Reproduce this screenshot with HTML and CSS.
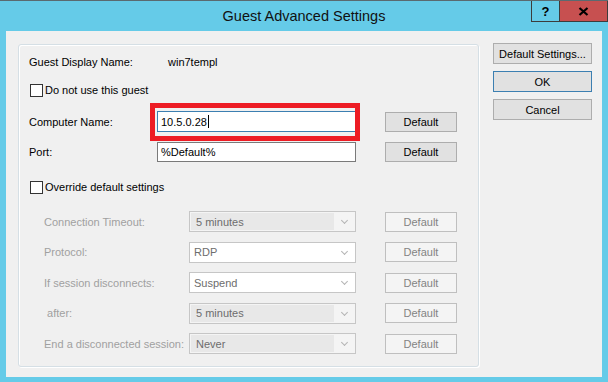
FILE: index.html
```html
<!DOCTYPE html>
<html lang="en">
<head>
  <meta charset="UTF-8">
  <title>Guest Advanced Settings</title>
  <link rel="stylesheet" href="styles.css">
</head>
<body>

  <div class="window">
    <!-- Title bar -->
    <div class="titlebar">
      <div></div>
      <div class="title">Guest Advanced Settings</div>
      <div class="caption">
        <div class="cap-btn help">?</div>
        <div class="cap-btn close">
          <svg width="11" height="9" viewBox="0 0 11 9">
            <path d="M1.5 1 L9.5 8 M9.5 1 L1.5 8" stroke="#000" stroke-width="2.2" fill="none"/>
          </svg>
        </div>
      </div>
    </div>

    <div class="client">
      <div class="group">
        <div class="row row-name">
          <span class="label label-name">Guest Display Name:</span>
          <span>win7templ</span>
        </div>

        <div class="check check-first"><span class="box"></span>Do not use this guest</div>

        <div class="row row-computer">
          <span class="label">Computer Name:</span>
          <div class="field focused highlight">10.5.0.28<span class="caret"></span></div>
          <button class="btn btn-small">Default</button>
        </div>

        <div class="row row-port">
          <span class="label">Port:</span>
          <div class="field">%Default%</div>
          <button class="btn btn-small">Default</button>
        </div>

        <div class="check check-override"><span class="box"></span>Override default settings</div>

        <!-- Disabled settings -->
        <div class="dim-rows">
          <div class="row">
            <span class="label dim">Connection Timeout:</span>
            <div class="combo readonly"><span class="value">5 minutes</span><span class="chevron"></span></div>
            <button class="btn btn-small" disabled>Default</button>
          </div>
          <div class="row">
            <span class="label dim">Protocol:</span>
            <div class="combo"><span class="value">RDP</span><span class="chevron"></span></div>
            <button class="btn btn-small" disabled>Default</button>
          </div>
          <div class="row">
            <span class="label dim">If session disconnects:</span>
            <div class="combo"><span class="value">Suspend</span><span class="chevron"></span></div>
            <button class="btn btn-small" disabled>Default</button>
          </div>
          <div class="row">
            <span class="label dim">&nbsp;after:</span>
            <div class="combo readonly"><span class="value">5 minutes</span><span class="chevron"></span></div>
            <button class="btn btn-small" disabled>Default</button>
          </div>
          <div class="row">
            <span class="label dim">End a disconnected session:</span>
            <div class="combo readonly"><span class="value">Never</span><span class="chevron"></span></div>
            <button class="btn btn-small" disabled>Default</button>
          </div>
        </div>
      </div>

      <div class="side">
        <button class="btn">Default Settings...</button>
        <button class="btn btn-default">OK</button>
        <button class="btn">Cancel</button>
      </div>
    </div>
  </div>

</body>
</html>
```

FILE: styles.css
```css
/* Global */
body {
  margin: 0;
  font-family: 'Liberation Sans', Arial, sans-serif;
  font-size: 11px;
  color: #000;
  background: #65cbe8;
}

.window {
  width: 608px;
  height: 382px;
  box-sizing: border-box;
  background: #65cbe8;
  border-top: 1px solid #5a6a70;
  display: flex;
  flex-direction: column;
}

/* Title bar */
.titlebar {
  height: 30px;
  display: grid;
  grid-template-columns: 1fr auto 1fr;
  align-items: center;
}

.title {
  font-size: 14.5px;
  color: #111;
}

.caption {
  justify-self: end;
  align-self: start;
  display: flex;
  height: 20px;
  border: 1px solid #3c3c3c;
  border-top: none;
}

.cap-btn {
  display: flex;
  align-items: center;
  justify-content: center;
}

.help {
  width: 27px;
  font-weight: 700;
  font-size: 13px;
  border-right: 1px solid #3c3c3c;
}

.close {
  width: 47px;
  background: #c75050;
}

/* Client area */
.client {
  flex: 1;
  margin: 0 6px 5px;
  background: #f0f0f0;
  display: flex;
  gap: 14px;
  padding: 13px 10px 10px 12px;
}

.group {
  width: 461px;
  box-sizing: border-box;
  border: 1px solid #d5dfe5;
  border-radius: 3px;
  box-shadow: inset 1px 1px 0 #fff, 1px 1px 0 #fff;
  padding: 7px 0 0 10px;
  display: flex;
  flex-direction: column;
}

.row {
  display: flex;
  align-items: center;
}

.label {
  width: 128px;
  flex-shrink: 0;
}

.row-name { height: 20px; }
.label-name { width: 139px; }

.row-computer { margin-top: 11px; height: 21px; }
.row-port { margin-top: 10px; height: 20px; }

.check {
  display: flex;
  align-items: center;
  gap: 2px;
  height: 20px;
  margin-left: 1px;
}
.check-first { margin-top: 8px; }
.check-override { margin-top: 15px; }

.box {
  width: 13px;
  height: 13px;
  box-sizing: border-box;
  border: 1px solid #333;
  background: #fff;
}

/* Text fields */
.field {
  position: relative;
  width: 199px;
  height: 100%;
  box-sizing: border-box;
  border: 1px solid #7a7a7a;
  background: #fff;
  display: flex;
  align-items: center;
  padding-left: 3px;
}

.field.focused {
  border-color: #3c7fb1;
}

.caret {
  width: 1px;
  height: 13px;
  background: #000;
  margin-left: 1px;
}

/* Red marker drawn over the computer name field */
.highlight::after {
  content: '';
  position: absolute;
  top: -9px;
  left: -8px;
  right: -5px;
  bottom: -10px;
  border: 5px solid #ed1c24;
}

/* Buttons */
.btn {
  font-family: inherit;
  font-size: 11px;
  color: #000;
  background: #e1e1e1;
  border: 1px solid #adadad;
  padding: 0;
  height: 21px;
  width: 99px;
}

.btn-small {
  width: 72px;
  height: 20px;
  margin-left: 29px;
}

.btn-default {
  border-color: #3c7fb1;
}

.btn:disabled {
  background: #f4f4f4;
  border-color: #bfbfbf;
  color: #838383;
}

/* Disabled combo rows */
.dim-rows {
  margin-top: 14px;
  display: flex;
  flex-direction: column;
  gap: 9.5px;
}

.dim-rows .row { height: 21px; }

.label.dim {
  color: #a0a0a0;
  margin-left: 15px;
  width: 145px;
}

.combo {
  width: 167px;
  height: 100%;
  box-sizing: border-box;
  border: 1px solid #c6c6c6;
  background: #fff;
  display: flex;
  align-items: center;
  padding: 1px;
}

.combo .value {
  flex: 1;
  height: 100%;
  display: flex;
  align-items: center;
  padding-left: 3px;
  color: #6d6d6d;
}

.combo.readonly {
  background: #f4f4f4;
}

.combo.readonly .value {
  background: #e8e8e8;
  padding-left: 5px;
}

.chevron {
  width: 20px;
  height: 100%;
  position: relative;
}

.chevron::before {
  content: '';
  position: absolute;
  left: 8px;
  top: 5px;
  width: 4px;
  height: 4px;
  border-right: 1.5px solid #b4b4b4;
  border-bottom: 1.5px solid #b4b4b4;
  transform: rotate(45deg);
}

/* Right column */
.side {
  display: flex;
  flex-direction: column;
  gap: 7px;
  margin-top: -1px;
}
```
